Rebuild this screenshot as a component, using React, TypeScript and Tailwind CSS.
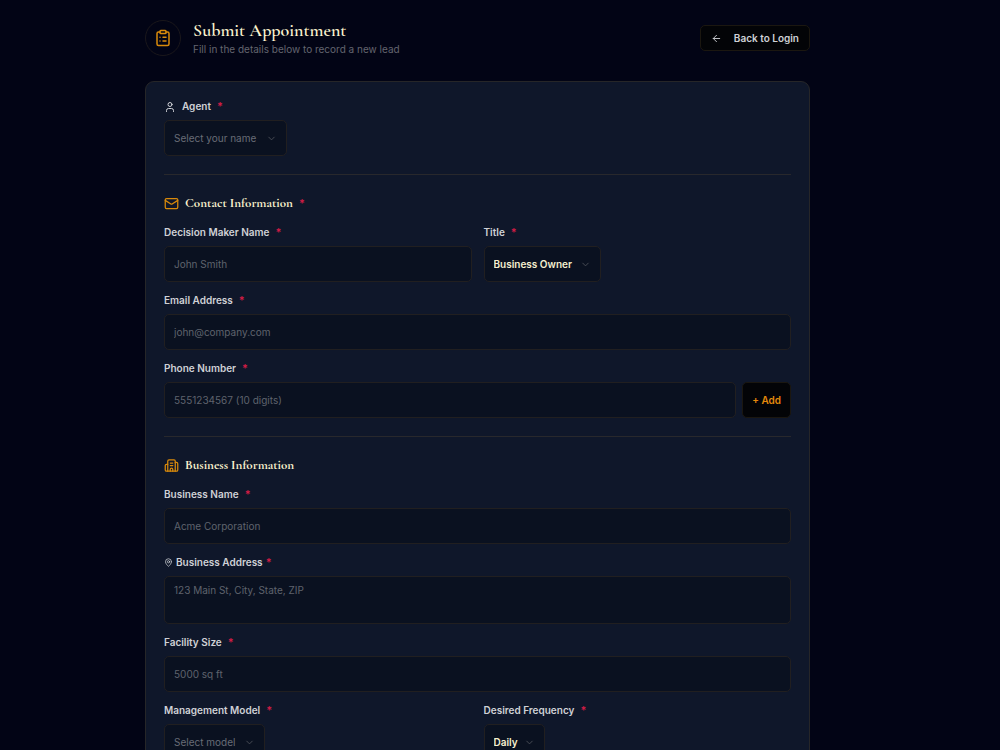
import React from 'react';
import { ArrowLeft, Building2, ChevronDown, ClipboardList, Mail, MapPin, User } from 'lucide-react';

const fieldBox =
  'rounded-[5px] border border-[#211f20] bg-[#0a1120] text-[10px] outline-none focus:border-[#d98a0b]';

const labelText = 'mb-[6px] flex items-center text-[10px] leading-[15px] font-semibold text-[#cfd1d6]';

function Required() {
  return <span className="font-['Inter',sans-serif] text-[11px] font-semibold text-[#d01c45]">*</span>;
}

function Field({ id, label, children }: { id: string; label: string; children: React.ReactNode }) {
  return (
    <div>
      <label htmlFor={id} className={`${labelText} gap-[6px]`}>
        {label} <Required />
      </label>
      {children}
    </div>
  );
}

function TextInput({ id, placeholder, type = 'text' }: { id: string; placeholder: string; type?: string }) {
  return (
    <input
      id={id}
      type={type}
      placeholder={placeholder}
      className={`${fieldBox} block h-9 w-full min-w-0 px-[9px] text-[#fef3c7] placeholder:text-[#5f636d]`}
    />
  );
}

function Dropdown({ id, options, width, muted }: { id: string; options: string[]; width: string; muted?: boolean }) {
  return (
    <div className={`relative ${width}`}>
      <select
        id={id}
        className={`${fieldBox} block h-9 w-full appearance-none pl-[9px] ${muted ? 'text-[#686c76]' : 'font-semibold text-[#f5efcf]'}`}
      >
        {options.map((o) => (
          <option key={o}>{o}</option>
        ))}
      </select>
      <ChevronDown size={11} className="pointer-events-none absolute top-[13px] right-[10px] text-[#4b4f58]" />
    </div>
  );
}

function SectionTitle({ icon, children }: { icon: React.ReactNode; children: React.ReactNode }) {
  return (
    <h2 className="mb-3 flex items-center gap-[6px] font-['Cormorant_Garamond','Liberation_Serif',serif] text-[13px] leading-5 font-bold text-[#fbf3cf]">
      <span className="text-[#d98a0b]">{icon}</span>
      {children}
    </h2>
  );
}

export default function App() {
  return (
    <div className="min-h-screen bg-[#020415] pt-[19px] pr-[45px] pb-8 font-['Inter',sans-serif]">
      <div className="mx-auto max-w-[665px]">
        <header className="mb-6 flex items-center justify-between">
          <div className="flex items-center gap-3">
            <div className="flex size-9 items-center justify-center rounded-full border border-[#1a171b] text-[#d98a0b]">
              <ClipboardList size={18} />
            </div>
            <div>
              <h1 className="font-['Cormorant_Garamond','Liberation_Serif',serif] text-[18px] leading-[22px] font-semibold text-[#fbf3cf]">
                Submit Appointment
              </h1>
              <p className="text-[10px] leading-4 text-[#64656f]">Fill in the details below to record a new lead</p>
            </div>
          </div>
          <button
            type="button"
            className="flex h-[26px] items-center gap-3 rounded-[5px] border border-[#1b1710] bg-[#030407] px-[10px] text-[10px] font-semibold text-[#cfd1d6]"
          >
            <ArrowLeft size={11} /> Back to Login
          </button>
        </header>

        <form className="rounded-[9px] border border-[#262628] bg-[#0f172a] px-[18px] py-[17px]">
          <section className="mb-[18px] border-b border-[#28282c] pb-[18px]">
            <label htmlFor="agent" className={`${labelText} gap-[6px]`}>
              <User size={12} /> Agent <Required />
            </label>
            <Dropdown id="agent" options={['Select your name']} width="w-[123px]" muted />
          </section>

          <section className="mb-[18px] border-b border-[#28282c] pb-[18px]">
            <SectionTitle icon={<Mail size={15} />}>
              Contact Information <Required />
            </SectionTitle>
            <div className="space-y-[11px]">
              <div className="grid grid-cols-2 gap-3">
                <Field id="name" label="Decision Maker Name">
                  <TextInput id="name" placeholder="John Smith" />
                </Field>
                <Field id="title" label="Title">
                  <Dropdown id="title" options={['Business Owner', 'Manager']} width="w-[117px]" />
                </Field>
              </div>
              <Field id="email" label="Email Address">
                <TextInput id="email" type="email" placeholder="john@company.com" />
              </Field>
              <Field id="phone" label="Phone Number">
                <div className="flex gap-[6px]">
                  <TextInput id="phone" type="tel" placeholder="5551234567 (10 digits)" />
                  <button
                    type="button"
                    className="h-9 shrink-0 rounded-[5px] border border-[#1b1710] bg-[#030407] px-[9px] text-[10px] font-semibold text-[#e58a0c]"
                  >
                    + Add
                  </button>
                </div>
              </Field>
            </div>
          </section>

          <section>
            <SectionTitle icon={<Building2 size={15} />}>Business Information</SectionTitle>
            <div className="space-y-[11px]">
              <Field id="business" label="Business Name">
                <TextInput id="business" placeholder="Acme Corporation" />
              </Field>
              <div>
                <label htmlFor="address" className={`${labelText} gap-[3px]`}>
                  <MapPin size={9} /> Business Address <Required />
                </label>
                <textarea
                  id="address"
                  placeholder="123 Main St, City, State, ZIP"
                  className={`${fieldBox} block h-12 w-full resize-none px-[9px] py-[5px] leading-4 text-[#fef3c7] placeholder:text-[#5f636d]`}
                />
              </div>
              <Field id="size" label="Facility Size">
                <TextInput id="size" placeholder="5000 sq ft" />
              </Field>
              <div className="grid grid-cols-2 gap-3">
                <Field id="model" label="Management Model">
                  <Dropdown id="model" options={['Select model']} width="w-[101px]" muted />
                </Field>
                <Field id="frequency" label="Desired Frequency">
                  <Dropdown id="frequency" options={['Daily', 'Weekly']} width="w-[61px]" />
                </Field>
              </div>
            </div>
          </section>
        </form>
      </div>
    </div>
  );
}
